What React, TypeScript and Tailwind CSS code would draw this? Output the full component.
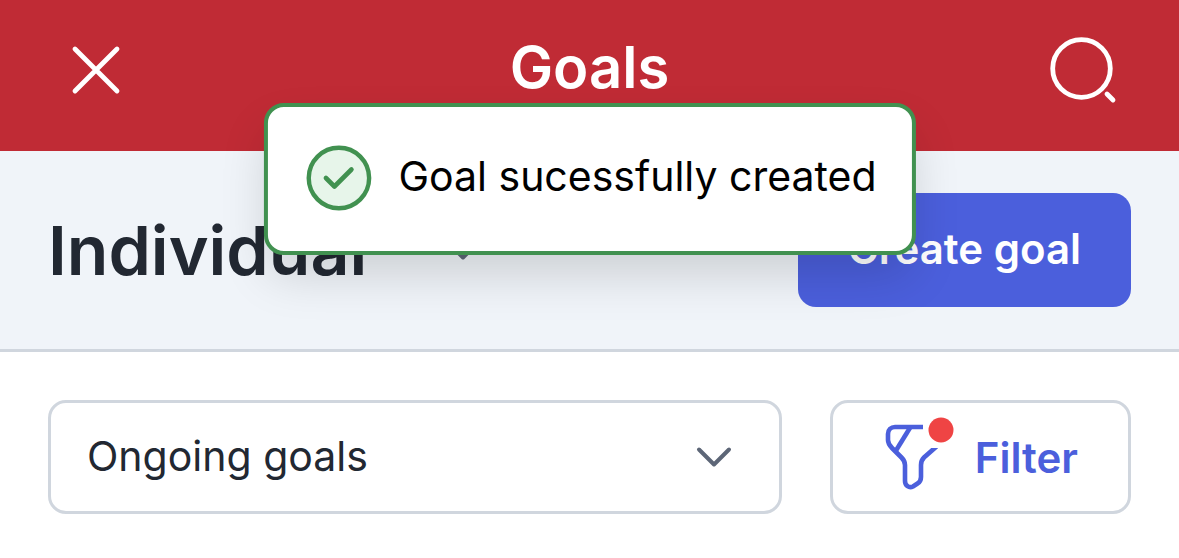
import type { ReactNode } from "react";

const GOAL_STATUSES = ["Ongoing goals", "Completed goals", "Archived goals"];

function ChevronDown({ className = "" }: { className?: string }) {
  return (
    <svg viewBox="0 0 40 40" fill="none" className={`size-10 shrink-0 ${className}`} aria-hidden="true">
      <path d="M5 12.5 20 27.5 35 12.5" stroke="#5d6677" strokeWidth="4" strokeLinecap="round" strokeLinejoin="round" />
    </svg>
  );
}

function CloseIcon() {
  return (
    <svg viewBox="0 0 72 72" fill="none" className="size-[72px]" aria-hidden="true">
      <path d="M15 15 57 57M57 15 15 57" stroke="white" strokeWidth="4.8" strokeLinecap="round" />
    </svg>
  );
}

function SearchIcon() {
  return (
    <svg viewBox="0 0 72 72" fill="none" className="size-[72px]" aria-hidden="true">
      <circle cx="34.5" cy="34.5" r="28.8" stroke="white" strokeWidth="4.8" />
      <path d="M60 60 66 66" stroke="white" strokeWidth="4.8" strokeLinecap="round" />
    </svg>
  );
}

function CheckIcon() {
  return (
    <svg viewBox="0 0 72 72" className="size-[72px] shrink-0" aria-hidden="true">
      <circle cx="36" cy="37" r="30.2" fill="#e7f5ea" stroke="#419150" strokeWidth="4.4" />
      <path d="M23 37 31.5 45.5 48.5 28.5" fill="none" stroke="#419150" strokeWidth="4.6" strokeLinecap="round" strokeLinejoin="round" />
    </svg>
  );
}

function FilterIcon() {
  return (
    <svg viewBox="0 3 72 80" fill="none" className="h-20 w-[72px] shrink-0" aria-hidden="true">
      <g stroke="#4b5fdc" strokeWidth="4.6">
        <path d="M40 13H12C8 13 5 16 5 20V26C5 29 7 32 9 34L18.5 43.5C20.5 45.5 22 48 22 51V67C22 71.5 26 74.5 30 72.5L34.5 69.5C37 68 38 66 38 63V51C38 48 39 45.5 41 43.5L53.5 32.5" />
        <path d="M27.5 13 13 36.5" />
      </g>
      <path d="M46 24H62V34H46Z" fill="white" />
      <circle cx="58" cy="16" r="12.5" fill="#ef4444" />
    </svg>
  );
}

function Toast({ children }: { children: ReactNode }) {
  return (
    <div
      role="status"
      className="absolute left-1/2 top-[103px] flex h-[152px] -translate-x-1/2 items-center gap-6 whitespace-nowrap rounded-[20px] border-4 border-[#419150] bg-white px-[35px] pb-1 text-[41px] text-black shadow-[0_24px_48px_-4px_rgba(0,0,0,0.15)]"
    >
      <CheckIcon />
      {children}
    </div>
  );
}

export default function App() {
  return (
    <div className="relative min-h-screen bg-white font-['Inter',sans-serif] text-[#222832]">
      <header className="flex h-[151px] items-start justify-between bg-[#c02b35] px-[60px] pt-[34px] text-white">
        <button type="button" aria-label="Close">
          <CloseIcon />
        </button>
        <h1 className="text-[58px] font-semibold leading-[66px]">Goals</h1>
        <button type="button" aria-label="Search">
          <SearchIcon />
        </button>
      </header>

      <section className="flex items-center justify-between border-b-[3px] border-[#d0d6de] bg-[#f0f4f9] px-12 py-[42px]">
        <h2 className="text-[68px] font-semibold leading-[80px]">
          <button type="button" className="flex items-center gap-[76px]">
            Individual
            <ChevronDown />
          </button>
        </h2>
        <button type="button" className="h-[114px] rounded-[18px] bg-[#4b5fdc] px-[50px] pb-1 text-[42px] font-semibold text-white">
          Create goal
        </button>
      </section>

      <div className="flex gap-12 px-12 py-12">
        <div className="relative flex-1">
          <select
            aria-label="Goal status"
            className="h-[114px] w-full appearance-none rounded-[18px] border-[3px] border-[#d0d6de] bg-white pl-9 pr-24 text-[41px]"
          >
            {GOAL_STATUSES.map((status) => (
              <option key={status}>{status}</option>
            ))}
          </select>
          <ChevronDown className="pointer-events-none absolute inset-y-0 right-12 my-auto" />
        </div>
        <button
          type="button"
          className="flex h-[114px] items-center gap-5 rounded-[18px] border-[3px] border-[#d0d6de] bg-white px-[50px] text-[42px] font-semibold text-[#4b5fdc]"
        >
          <FilterIcon />
          Filter
        </button>
      </div>

      <Toast>Goal sucessfully created</Toast>
    </div>
  );
}
